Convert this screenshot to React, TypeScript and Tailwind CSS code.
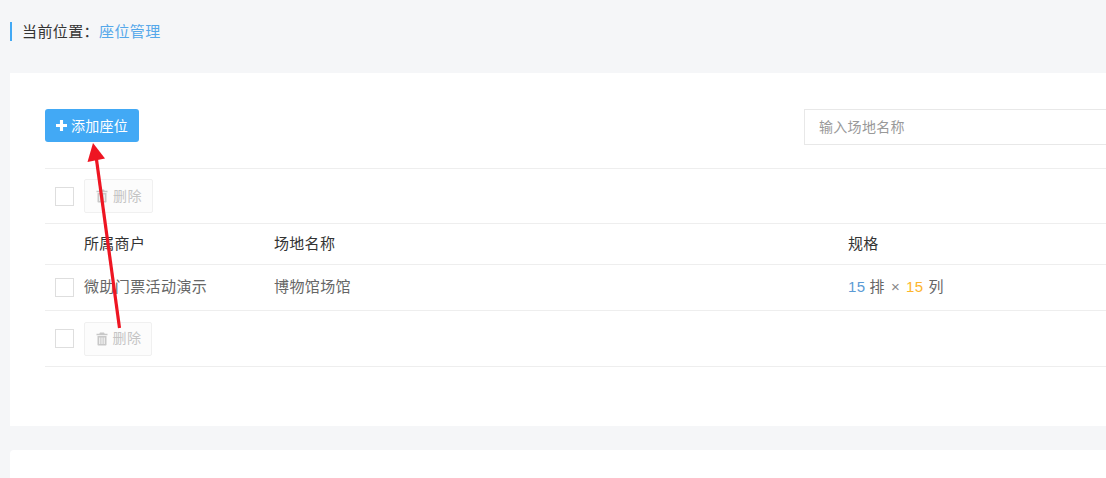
import React from 'react';

function Check() {
  return <span className="block w-[19px] h-[19px] border border-[#dedede] bg-white shrink-0" />;
}

function TrashIcon({ className }: { className?: string }) {
  return (
    <svg viewBox="0 0 12 14" className={className} fill="currentColor">
      <path d="M4 0.5h4l0.7 1.3H11.5v1.4H0.5V1.8H3.3z" />
      <path d="M1.5 4h9v8.6c0 .6-.4 1-1 1h-7c-.6 0-1-.4-1-1zM3.3 5.5v6.6h1V5.5zM5.5 5.5v6.6h1V5.5zM7.7 5.5v6.6h1V5.5z" fillRule="evenodd" />
    </svg>
  );
}

function DeleteButton({ width }: { width: string }) {
  return (
    <button className={`${width} h-[34px] pl-[1px] flex items-center justify-center gap-[5px] border border-[#f0f0f0] bg-[#fcfcfc] rounded-[2px] text-[14px] tracking-[0.5px] text-[#c4c4c4]`}>
      <TrashIcon className="w-[12px] h-[14px] text-[#c8c8c8]" />
      <span>删除</span>
    </button>
  );
}

export default function App() {
  return (
    <div className="relative w-[1106px] h-[478px] overflow-hidden bg-[#f5f6f8] font-['Liberation_Sans','Noto_Sans_CJK_SC',sans-serif]">
      {/* 当前位置 */}
      <div className="h-[73px] pt-[22px] pl-[10px]">
        <div className="h-[19px] pt-[1px] border-l-2 border-[#42a9f5] pl-[10px] flex items-center text-[15px] tracking-[0.4px]">
          <span className="text-[#333]">当前位置：</span>
          <span className="text-[#55a8ea]">座位管理</span>
        </div>
      </div>

      {/* 主卡片 */}
      <div className="ml-[10px] w-[1300px] h-[353px] bg-white pt-[36px] pl-[35px]">
        <div className="h-[60px] border-b border-[#eeeeee] flex items-start">
          <button className="w-[94px] h-[33px] bg-[#42a9f5] rounded-[3px] text-white text-[14px] tracking-[0.3px] flex items-center justify-center gap-[4px]">
            <svg viewBox="0 0 12 12" className="w-[11px] h-[11px]" fill="currentColor">
              <path d="M4.3 0h3.4v4.3H12v3.4H7.7V12H4.3V7.7H0V4.3h4.3z" />
            </svg>
            <span className="pt-[1px]">添加座位</span>
          </button>
          <input
            readOnly
            placeholder="输入场地名称"
            className="ml-[665px] w-[400px] h-[36px] border border-[#e8e8e8] px-[14px] text-[14px] tracking-[0.3px] outline-none placeholder:text-[#999]"
          />
        </div>

        <div className="h-[55px] border-b border-[#eeeeee] pl-[10px] flex items-center gap-[10px]">
          <Check />
          <DeleteButton width="w-[69px]" />
        </div>

        <div className="h-[41px] border-b border-[#eeeeee] flex items-center text-[15px] tracking-[0.3px] text-[#333]">
          <span className="ml-[39px] w-[190px]">所属商户</span>
          <span className="w-[574px]">场地名称</span>
          <span>规格</span>
        </div>

        <div className="h-[46px] border-b border-[#eeeeee] pl-[10px] flex items-center text-[15px] tracking-[0.4px] text-[#666]">
          <Check />
          <span className="ml-[10px] w-[190px]">微助门票活动演示</span>
          <span className="w-[574px]">博物馆场馆</span>
          <span className="flex items-center">
            <span className="text-[#5b9bd5]">15</span>
            <span className="ml-[4px]">排</span>
            <span className="ml-[6px] text-[#888]">×</span>
            <span className="ml-[6px] text-[#fdb52c]">15</span>
            <span className="ml-[5px]">列</span>
          </span>
        </div>

        <div className="h-[56px] border-b border-[#eeeeee] pl-[10px] flex items-center gap-[10px]">
          <Check />
          <DeleteButton width="w-[68px]" />
        </div>
      </div>

      {/* 下方卡片 */}
      <div className="mt-[24px] ml-[10px] w-[1300px] h-[60px] bg-white rounded-t-[4px]" />

      {/* 标注箭头 */}
      <svg className="absolute left-0 top-0 pointer-events-none" width="1106" height="478" viewBox="0 0 1106 478">
        <line x1="119.5" y1="328" x2="96" y2="156" stroke="#ee1522" strokeWidth="3.2" />
        <polygon points="93,143 87.5,162 105,158.5" fill="#ee1522" />
      </svg>
    </div>
  );
}
